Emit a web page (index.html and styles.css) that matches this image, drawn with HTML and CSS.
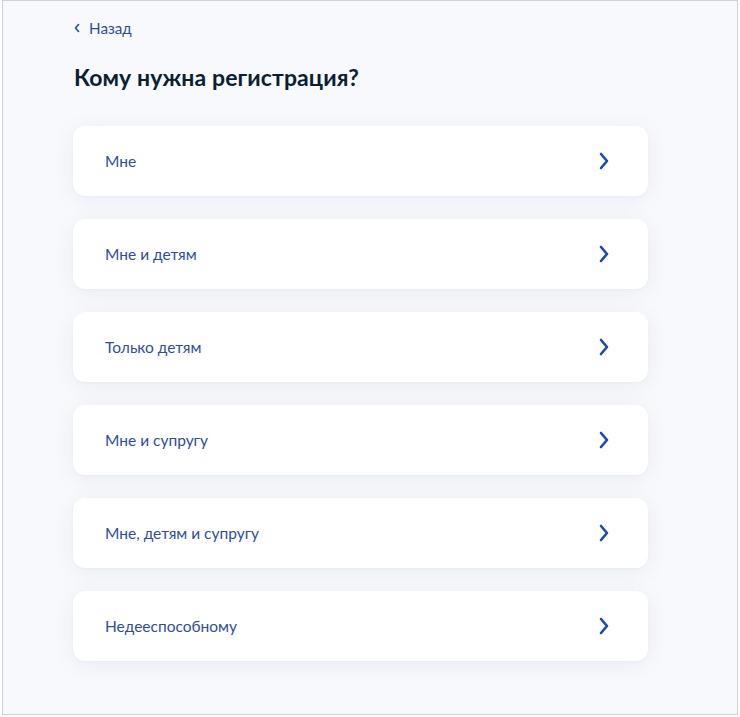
FILE: index.html
```html
<!DOCTYPE html>
<html lang="ru">
<head>
<meta charset="utf-8">
<link rel="stylesheet" href="styles.css">
</head>
<body>
<div class="frame">
  <div class="content">
    <a class="back" href="#">
      <svg class="back-icon" width="8" height="10" viewBox="0 0 8 10"><path d="M5.5 1.5 L2.5 5 L5.5 8.5" fill="none" stroke="#0d4cd3" stroke-width="1.6" stroke-linecap="round" stroke-linejoin="round"/></svg>
      <span>Назад</span>
    </a>
    <h1 class="title">Кому нужна регистрация?</h1>
    <div class="list">
      <a class="card" href="#"><span>Мне</span><svg class="chev" width="14" height="18" viewBox="0 0 14 18"><path d="M4 2 L10 9 L4 16" fill="none" stroke="#1a47b8" stroke-width="2.6" stroke-linecap="round" stroke-linejoin="round"/></svg></a>
      <a class="card" href="#"><span>Мне и детям</span><svg class="chev" width="14" height="18" viewBox="0 0 14 18"><path d="M4 2 L10 9 L4 16" fill="none" stroke="#1a47b8" stroke-width="2.6" stroke-linecap="round" stroke-linejoin="round"/></svg></a>
      <a class="card" href="#"><span>Только детям</span><svg class="chev" width="14" height="18" viewBox="0 0 14 18"><path d="M4 2 L10 9 L4 16" fill="none" stroke="#1a47b8" stroke-width="2.6" stroke-linecap="round" stroke-linejoin="round"/></svg></a>
      <a class="card" href="#"><span>Мне и супругу</span><svg class="chev" width="14" height="18" viewBox="0 0 14 18"><path d="M4 2 L10 9 L4 16" fill="none" stroke="#1a47b8" stroke-width="2.6" stroke-linecap="round" stroke-linejoin="round"/></svg></a>
      <a class="card" href="#"><span>Мне, детям и супругу</span><svg class="chev" width="14" height="18" viewBox="0 0 14 18"><path d="M4 2 L10 9 L4 16" fill="none" stroke="#1a47b8" stroke-width="2.6" stroke-linecap="round" stroke-linejoin="round"/></svg></a>
      <a class="card" href="#"><span>Недееспособному</span><svg class="chev" width="14" height="18" viewBox="0 0 14 18"><path d="M4 2 L10 9 L4 16" fill="none" stroke="#1a47b8" stroke-width="2.6" stroke-linecap="round" stroke-linejoin="round"/></svg></a>
    </div>
  </div>
</div>
</body>
</html>
```
FILE: styles.css
```css
* { box-sizing: border-box; }
html, body { margin: 0; padding: 0; background: #ffffff; }
body {
  font-family: Lato, "Noto Sans", sans-serif;
  width: 740px;
  height: 717px;
  overflow: hidden;
}
.frame {
  margin-left: 2px;
  width: 736px;
  height: 715px;
  border: 1px solid #cfd1d6;
  background: #f7f9fd;
  overflow: hidden;
}
.content {
  padding: 17px 0 0 70px;
  width: 645px;
}
.back {
  display: flex;
  align-items: center;
  gap: 8px;
  text-decoration: none;
  color: #2a4c9d;
  font-size: 15.2px;
  line-height: 20px;
  height: 20px;
}
.back-icon { display: block; }
.title {
  margin: 24px 0 0 1px;
  font-size: 23px;
  line-height: 30px;
  font-weight: 700;
  color: #0b1f33;
  letter-spacing: 0.1px;
}
.list {
  margin-top: 34px;
  display: flex;
  flex-direction: column;
  gap: 23px;
}
.card {
  display: flex;
  align-items: center;
  justify-content: space-between;
  height: 70px;
  padding: 0 37px 0 32px;
  background: #ffffff;
  border-radius: 12px;
  box-shadow: 0 4px 24px rgba(11, 31, 51, 0.06), 0 1px 3px rgba(11, 31, 51, 0.03);
  text-decoration: none;
  color: #2c4e9e;
  font-size: 15.5px;
  line-height: 20px;
}
.chev { display: block; }
```
